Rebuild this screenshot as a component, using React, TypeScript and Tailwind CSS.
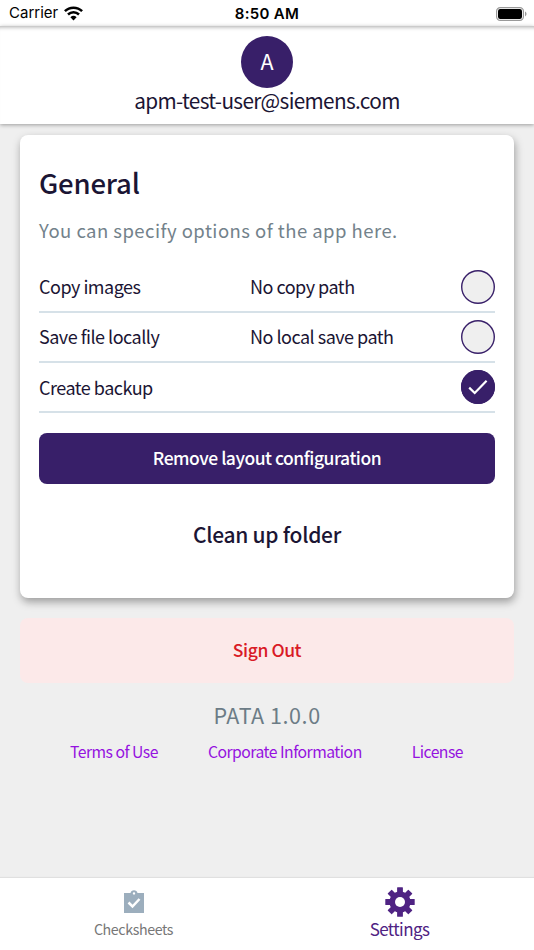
import { useState } from 'react';

interface Option {
  label: string;
  path?: string;
}

const options: Option[] = [
  { label: 'Copy images', path: 'No copy path' },
  { label: 'Save file locally', path: 'No local save path' },
  { label: 'Create backup' },
];

function StatusBar() {
  return (
    <div className="grid h-[26px] shrink-0 grid-cols-3 items-center bg-white pt-px font-['Inter',sans-serif] text-[15px] text-black">
      <div className="flex items-center gap-1.5 pl-[9px]">
        <span>Carrier</span>
        <svg width="19" height="15" viewBox="0 0 19 15" fill="none" stroke="currentColor" strokeWidth="2.5">
          <path d="M.9 5.2a12.2 12.2 0 0 1 17.2 0" />
          <path d="M4 8.5a7.9 7.9 0 0 1 11 0" />
          <path d="M9.5 14.4 6.4 11.3a4.5 4.5 0 0 1 6.2 0z" fill="currentColor" stroke="none" />
        </svg>
      </div>
      <span className="pt-px text-center font-semibold tracking-[0.3px]">8:50 AM</span>
      <svg className="mr-[7px] justify-self-end" width="31" height="14" viewBox="0 0 31 14">
        <rect x="0.6" y="0.6" width="26.8" height="12.8" rx="3.6" fill="none" stroke="#999" strokeWidth="1.2" />
        <rect x="2" y="2" width="24" height="10" rx="2.2" fill="#000" />
        <path d="M29 4.6c2 .9 2 3.9 0 4.8z" fill="#999" />
      </svg>
    </div>
  );
}

function CheckCircle({ checked, onToggle }: { checked: boolean; onToggle: () => void }) {
  return (
    <button
      onClick={onToggle}
      className={`flex size-[34px] items-center justify-center rounded-full inset-ring-[1.4px] inset-ring-[#381f69] ${
        checked ? 'bg-[#381f69]' : 'bg-[#efefef]'
      }`}
    >
      {checked && (
        <svg width="20" height="16" viewBox="0 0 20 16" fill="none" stroke="#fff" strokeWidth="2.2">
          <path d="M1.2 8.6 6.7 14 18.6 1.8" />
        </svg>
      )}
    </button>
  );
}

export default function App() {
  const [checked, setChecked] = useState([false, false, true]);

  const toggle = (index: number) => {
    setChecked((prev) => prev.map((value, i) => (i === index ? !value : value)));
  };

  return (
    <div className="flex h-[950px] w-full flex-col bg-[#efefef] font-['Noto_Sans_CJK_SC',sans-serif] text-[#1b1534]">
      <StatusBar />

      {/* User header */}
      <header className="flex h-[98px] shrink-0 flex-col items-center bg-white pt-[10px] shadow-[0_1px_4px_rgba(0,0,0,0.35),inset_0_5px_4px_-4px_rgba(0,0,0,0.35)]">
        <div className="flex size-[52px] items-center justify-center rounded-full bg-[#381f69] pb-0.5 text-[21.5px] leading-none text-white">
          A
        </div>
        <span className="-mt-px text-[20.75px] leading-[26px] tracking-[-0.66px]">apm-test-user@siemens.com</span>
      </header>

      <main className="flex flex-1 flex-col px-5 pt-[11px]">
        {/* General card */}
        <section className="flex h-[463px] flex-col rounded-lg bg-white px-[19px] pt-[31px] shadow-[1px_4px_8px_rgba(0,0,0,0.35)]">
          <h1 className="text-[27.5px] leading-8 font-medium tracking-[-0.2px]">General</h1>
          <p className="mt-5 text-[18.5px] leading-6 tracking-[0.46px] text-[#73828b]">
            You can specify options of the app here.
          </p>

          <div className="mt-[20.5px] flex flex-col">
            {options.map((option, index) => (
              <div
                key={option.label}
                className="flex h-[50.33px] items-center border-b-2 border-[#d6e1e8] text-[18px] leading-6 tracking-[-0.5px]"
              >
                <span className="w-[211px] pb-px">{option.label}</span>
                <span className="flex-1 pb-px">{option.path}</span>
                <CheckCircle checked={checked[index]} onToggle={() => toggle(index)} />
              </div>
            ))}
          </div>

          <button className="mt-[19.5px] h-[51.5px] rounded-lg bg-[#381f69] pb-0.5 text-[17.5px] font-medium tracking-[-0.48px] text-white">
            Remove layout configuration
          </button>
          <button className="mt-[34px] text-[21px] leading-8 font-medium tracking-[-0.27px]">Clean up folder</button>
        </section>

        <button className="mt-5 h-[65px] shrink-0 rounded-lg bg-[#fce9e9] text-[17.5px] font-medium tracking-[-0.42px] text-[#d91a26]">
          Sign Out
        </button>

        <p className="mt-[19px] text-center text-[21.5px] leading-[26px] tracking-[0.55px] text-[#6c7c86]">PATA 1.0.0</p>

        <nav className="mt-[11px] flex justify-between pr-[51px] pl-[50px] text-[15.75px] leading-[26px] tracking-[-0.52px] text-[#9512e0]">
          <a href="#terms">Terms of Use</a>
          <a href="#corporate">Corporate Information</a>
          <a href="#license">License</a>
        </nav>
      </main>

      {/* Tab bar */}
      <nav className="grid h-[72px] shrink-0 grid-cols-2 bg-white shadow-[0_-1px_1px_rgba(0,0,0,0.06)]">
        <button className="flex flex-col items-center pt-3 text-[14.25px] text-[#777]">
          <svg width="22" height="24" viewBox="0 0 22 24">
            <path
              d="M1 3h6.5a3.6 3.6 0 0 1 7 0H21v20H1zM11 2.2a1.2 1.2 0 1 0 0 2.4 1.2 1.2 0 0 0 0-2.4z"
              fill="#9caebd"
              fillRule="evenodd"
            />
            <path d="m5.5 12.5 4 4 7-7.5" fill="none" stroke="#fff" strokeWidth="2.5" />
          </svg>
          <span className="mt-[3px] leading-6 tracking-[-0.4px]">Checksheets</span>
        </button>
        <button className="flex flex-col items-center pt-[9px] pr-0.5 text-[17px] text-[#4f2383]">
          <svg width="30" height="30" viewBox="-15 -15 30 30" fill="currentColor">
            {[0, 45, 90, 135].map((angle) => (
              <rect key={angle} x="-2.9" y="-14.7" width="5.8" height="29.4" rx="0.5" transform={`rotate(${angle})`} />
            ))}
            <circle r="10.6" />
            <circle r="5" fill="#fff" />
          </svg>
          <span className="leading-6 tracking-[-0.6px]">Settings</span>
        </button>
      </nav>
    </div>
  );
}
